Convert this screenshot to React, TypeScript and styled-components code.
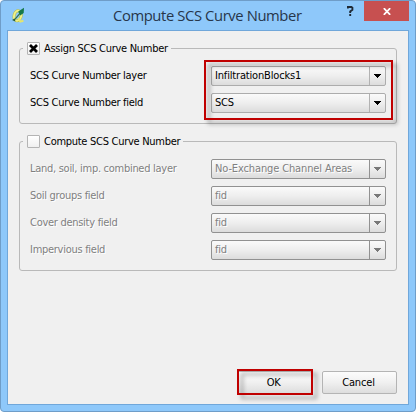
import React from "react";
import styled, { createGlobalStyle, css } from "styled-components";

const GlobalStyle = createGlobalStyle`
  html, body { margin: 0; padding: 0; background: #fff; overflow: hidden; }
  * { box-sizing: border-box; }
`;

const uiFont = css`
  font-family: "DejaVu Sans Condensed", "DejaVu Sans", sans-serif;
  font-stretch: condensed;
  font-size: 11px;
  line-height: 14px;
`;

const Window = styled.div`
  width: 416px;
  height: 412px;
  display: flex;
  flex-direction: column;
  background: #8ec8fa;
  border: 1px solid #6f9dc8;
  border-radius: 4px;
  padding: 0 6px 6px;
  ${uiFont}
`;

const TitleBar = styled.header`
  height: 29px;
  flex: none;
  display: flex;
  align-items: flex-start;
`;

const AppIcon = styled.svg`
  width: 16px;
  height: 16px;
  margin: 6px 0 0 4px;
  flex: none;
`;

const Title = styled.h1`
  margin: 4px 0 0 86px;
  width: 230px;
  font: 400 14.8px/21px "Open Sans", "Noto Sans", sans-serif;
  letter-spacing: -0.4px;
  color: #27364a;
  white-space: nowrap;
`;

const HelpButton = styled.button`
  all: unset;
  width: 15px;
  height: 20px;
  display: flex;
  justify-content: center;
  padding-top: 5px;
  box-sizing: border-box;
`;

const CloseButton = styled.button`
  all: unset;
  width: 45px;
  height: 20px;
  margin-left: 6px;
  display: flex;
  align-items: center;
  justify-content: center;
  background: #c75050;
`;

const Client = styled.main`
  height: 375px;
  display: flex;
  flex-direction: column;
  background: #f0f0f0;
  border: 1px solid #70a7da;
  padding: 11px 11px 10px;
`;

const Group = styled.section<{ $height: number; $gap: number }>`
  height: ${(p) => p.$height}px;
  flex: none;
  margin-top: ${(p) => p.$gap}px;
  border: 1px solid #b9b9b9;
  border-radius: 3px;
  padding: 0 10px;
`;

const GroupHeader = styled.label`
  display: flex;
  align-items: center;
  width: fit-content;
  height: 15px;
  margin: -8px 0 10px -7px;
  padding: 0 3px 0 4px;
  background: #f0f0f0;
  color: #000;
`;

const CheckBox = styled.span`
  width: 13px;
  height: 13px;
  margin-right: 4px;
  border: 1px solid #b4b4b4;
  border-radius: 1px;
  background: linear-gradient(#fff, #f0f0f0);
  display: flex;
  align-items: center;
  justify-content: center;
`;

const Text = styled.span<{ $spacing?: number }>`
  letter-spacing: ${(p) => p.$spacing ?? -0.28}px;
  white-space: nowrap;
`;

const Fields = styled.div<{ $disabled?: boolean }>`
  display: grid;
  grid-template-columns: 181px 175px;
  row-gap: 7px;
  position: relative;
  color: ${(p) => (p.$disabled ? "#808080" : "#000")};
  text-shadow: ${(p) => (p.$disabled ? "1px 1px 0 #fff" : "none")};
`;

const FieldLabel = styled.div`
  height: 20px;
  display: flex;
  align-items: center;
`;

const Combo = styled.div<{ $disabled?: boolean }>`
  height: 20px;
  display: flex;
  align-items: center;
  border: 1px solid ${(p) => (p.$disabled ? "#919191" : "#acacac")};
  border-radius: 2px;
  background: linear-gradient(#fafafa, #eeeeee 50%, #dcdcdc);
  padding-left: 3px;
`;

const ComboValue = styled.div`
  flex: 1;
  display: flex;
`;

const ComboArrow = styled.span<{ $disabled?: boolean }>`
  width: 16px;
  height: 18px;
  border-left: 1px solid ${(p) => (p.$disabled ? "#919191" : "#b2b2b2")};
  display: flex;
  align-items: center;
  justify-content: center;
`;

const Highlight = styled.div<{ $inset: string }>`
  position: absolute;
  inset: ${(p) => p.$inset};
  border: 2px solid #c00000;
  filter: drop-shadow(4px 4px 2px rgba(0, 0, 0, 0.36));
  pointer-events: none;
`;

const Footer = styled.footer`
  margin-top: auto;
  display: flex;
  justify-content: flex-end;
  gap: 10px;
`;

const Button = styled.button`
  ${uiFont}
  position: relative;
  width: 75px;
  height: 23px;
  padding: 0 2px 0 0;
  border: 1px solid #b4b4b4;
  border-radius: 2px;
  background: linear-gradient(#fcfcfc, #f0f0f0 50%, #dddddd);
  color: #000;
`;

type Field = { label: string; value: string; labelSpacing?: number; valueSpacing?: number };

const assignFields: Field[] = [
  { label: "SCS Curve Number layer", value: "InfiltrationBlocks1", valueSpacing: -0.17 },
  { label: "SCS Curve Number field", value: "SCS" },
];

const computeFields: Field[] = [
  { label: "Land, soil, imp. combined layer", value: "No-Exchange Channel Areas", valueSpacing: -0.13 },
  { label: "Soil groups field", value: "fid" },
  { label: "Cover density field", value: "fid" },
  { label: "Impervious field", value: "fid" },
];

function FieldRows({ fields, disabled }: { fields: Field[]; disabled?: boolean }) {
  return (
    <>
      {fields.map((f) => (
        <React.Fragment key={f.label}>
          <FieldLabel>
            <Text $spacing={f.labelSpacing}>{f.label}</Text>
          </FieldLabel>
          <Combo $disabled={disabled}>
            <ComboValue>
              <Text $spacing={f.valueSpacing}>{f.value}</Text>
            </ComboValue>
            <ComboArrow $disabled={disabled}>
              <svg width="7" height="4" viewBox="0 0 7 4" shapeRendering="crispEdges">
                <path d="M0 0H7V1H6V2H5V3H4V4H3V3H2V2H1V1H0Z" fill={disabled ? "#787878" : "#000"} />
              </svg>
            </ComboArrow>
          </Combo>
        </React.Fragment>
      ))}
    </>
  );
}

export default function App() {
  return (
    <>
      <GlobalStyle />
      <Window>
        <TitleBar>
          <AppIcon viewBox="0 0 16 16">
            <ellipse cx="6.6" cy="8.8" rx="3.5" ry="5" transform="rotate(15 6.6 8.8)" fill="none" stroke="#b9bf45" strokeWidth="3" />
            <ellipse cx="6.6" cy="8.8" rx="3.5" ry="5" transform="rotate(15 6.6 8.8)" fill="none" stroke="#eef08a" strokeWidth="2" />
            <path d="M7.3 11L9.4 14.6L12.4 13.8" fill="none" stroke="#e5e66d" strokeWidth="2" />
            <path d="M3 13.3L11 4" stroke="#357247" strokeWidth="1.2" />
            <path d="M7.2 4.6L13 0.8L12.7 6L9.2 8.5Z" fill="#16794a" />
            <path d="M1 13L3.8 11.6L4.4 14.4Z" fill="#245c3c" />
          </AppIcon>
          <Title>Compute SCS Curve Number</Title>
          <HelpButton aria-label="Help">
            <svg width="7" height="10" viewBox="0 0 7 10">
              <path d="M0.8 2.6V1H4.4L5.4 1.8V3.7L3.2 5.4V7M3.2 8V10" fill="none" stroke="#1f2a36" strokeWidth="1.9" />
            </svg>
          </HelpButton>
          <CloseButton aria-label="Close">
            <svg width="8" height="7" viewBox="0 0 8 7">
              <path d="M0.8 0.2L7.2 6.8M7.2 0.2L0.8 6.8" stroke="#fff" strokeWidth="1.8" />
            </svg>
          </CloseButton>
        </TitleBar>
        <Client>
          <Group $height={76} $gap={6}>
            <GroupHeader>
              <CheckBox>
                <svg width="9" height="9" viewBox="0 0 9 9">
                  <path d="M1 1L8 8M8 1L1 8" stroke="#000" strokeWidth="2.8" />
                </svg>
              </CheckBox>
              <Text>Assign SCS Curve Number</Text>
            </GroupHeader>
            <Fields>
              <FieldRows fields={assignFields} />
              <Highlight $inset="-6px -7px -7px 174px" />
            </Fields>
          </Group>
          <Group $height={130} $gap={17}>
            <GroupHeader>
              <CheckBox />
              <Text>Compute SCS Curve Number</Text>
            </GroupHeader>
            <Fields $disabled>
              <FieldRows fields={computeFields} disabled />
            </Fields>
          </Group>
          <Footer>
            <Button>
              <Text>OK</Text>
              <Highlight $inset="-3px -2px -2px -1px" />
            </Button>
            <Button>
              <Text $spacing={-0.15}>Cancel</Text>
            </Button>
          </Footer>
        </Client>
      </Window>
    </>
  );
}
